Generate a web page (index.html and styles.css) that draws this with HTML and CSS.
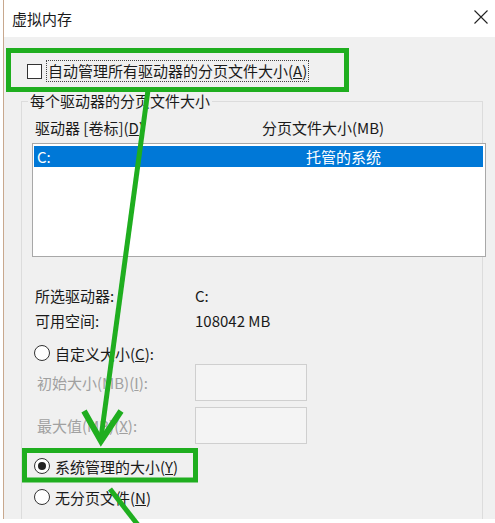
FILE: index.html
```html
<!DOCTYPE html>
<html lang="zh-CN">
<head>
<meta charset="utf-8">
<title>虚拟内存</title>
<link rel="stylesheet" href="styles.css">
</head>
<body>
<div class="page">
  <div class="window">
    <div class="titlebar">
      <span class="title">虚拟内存</span>
      <svg class="close" width="14" height="14" viewBox="0 0 14 14"><path d="M0.5 0.5 L13.5 13.5 M13.5 0.5 L0.5 13.5" stroke="#222" stroke-width="1.1" fill="none"/></svg>
    </div>
    <div class="content">
      <div class="auto-row">
        <span class="checkbox"></span>
        <span class="auto-label">自动管理所有驱动器的分页文件大小(<u>A</u>)</span>
      </div>
      <fieldset class="group">
        <legend>每个驱动器的分页文件大小</legend>
        <div class="list-header">
          <span class="col-drive">驱动器 [卷标](<u>D</u>)</span>
          <span class="col-size">分页文件大小(MB)</span>
        </div>
        <div class="list">
          <div class="list-row selected">
            <span class="cell-drive">C:</span>
            <span class="cell-size">托管的系统</span>
          </div>
        </div>
        <div class="info">
          <div class="info-row"><span class="info-label">所选驱动器:</span><span>C:</span></div>
          <div class="info-row"><span class="info-label">可用空间:</span><span>108042 MB</span></div>
        </div>
        <div class="radio-row r-custom"><span class="radio"></span><span>自定义大小(<u>C</u>):</span></div>
        <div class="field-row"><span class="field-label">初始大小(MB)(<u>I</u>):</span><span class="input"></span></div>
        <div class="field-row r-max"><span class="field-label">最大值(MB)(<u>X</u>):</span><span class="input"></span></div>
        <div class="radio-row r-system"><span class="radio checked"></span><span>系统管理的大小(<u>Y</u>)</span></div>
        <div class="radio-row r-none"><span class="radio"></span><span>无分页文件(<u>N</u>)</span></div>
      </fieldset>
    </div>
  </div>
  <svg class="annot" width="495" height="523" viewBox="0 0 495 523">
    <g fill="none" stroke="#1fae1f" stroke-width="5">
      <rect x="8.5" y="50.5" width="338" height="39"/>
      <rect x="24.5" y="450.5" width="171" height="29.5"/>
      <line x1="148" y1="90" x2="101" y2="438"/>
      <polyline points="84,411 101,441 121,411" stroke-width="6" stroke-linejoin="miter"/>
      <line x1="110" y1="489" x2="138" y2="525"/>
    </g>
  </svg>
</div>
</body>
</html>
```

FILE: styles.css
```css
html, body {
  margin: 0;
  padding: 0;
}

body {
  background: #fff;
  font-family: "Noto Sans CJK SC", "Noto Sans", sans-serif;
  font-size: 15px;
  color: #1a1a1a;
}

.page {
  position: relative;
  width: 495px;
  height: 523px;
  overflow: hidden;
}

.window {
  margin-left: 3px;
  border-left: 1px solid #c8a88e;
  height: 519px;
  display: flex;
  flex-direction: column;
}

.titlebar {
  height: 37px;
  flex: none;
  background: #fff;
  display: flex;
  align-items: center;
  justify-content: space-between;
  padding: 0 7px 0 8px;
}

.title {
  line-height: 20px;
}

.close {
  margin-bottom: 3px;
}

.content {
  flex: 1;
  background: #f0f0f0;
  padding: 23px 0 0 17px;
  overflow: hidden;
}

.auto-row {
  display: flex;
  align-items: center;
  height: 22px;
  padding-left: 6px;
}

.checkbox {
  width: 15px;
  height: 15px;
  box-sizing: border-box;
  border: 1px solid #333;
  background: #fff;
}

.auto-label {
  margin-left: 4px;
  line-height: 20px;
  border: 1px dotted #444;
  padding: 0 1px;
}

.group {
  margin: 9px 0 0 0;
  width: 462px;
  min-width: 0;
  box-sizing: border-box;
  border: 1px solid #dcdcdc;
  padding: 0 0 30px 10px;
}

.group legend {
  margin-left: -4px;
  padding: 0 2px;
  line-height: 20px;
}

.list-header {
  display: flex;
  margin-top: 7px;
  height: 20px;
  line-height: 20px;
  padding-left: 3px;
}

.col-drive {
  width: 227px;
}

.list {
  margin-top: 5px;
  width: 454px;
  height: 114px;
  box-sizing: border-box;
  border: 1px solid #a8a8a8;
  background: #fff;
  padding: 2px 2px 0 1px;
}

.list-row {
  display: flex;
  align-items: center;
  height: 21px;
  padding-left: 3px;
  line-height: 20px;
}

.list-row.selected {
  background: #0078d7;
  color: #fff;
}

.cell-drive {
  width: 269px;
}

.info {
  margin-top: 26px;
  padding-left: 3px;
}

.info-row {
  display: flex;
  align-items: center;
  height: 25px;
}

.info-label {
  width: 160px;
}

.radio-row {
  display: flex;
  align-items: center;
  height: 22px;
  padding-left: 2px;
}

.radio {
  width: 16px;
  height: 16px;
  box-sizing: border-box;
  border: 1px solid #333;
  border-radius: 50%;
  background: #fff;
  margin-right: 5px;
  display: flex;
  align-items: center;
  justify-content: center;
}

.radio.checked::after {
  content: "";
  width: 8px;
  height: 8px;
  border-radius: 50%;
  background: #222;
}

.r-custom {
  margin-top: 9px;
}

.field-row {
  display: flex;
  align-items: center;
  height: 37px;
  padding-left: 5px;
  color: #a0a0a0;
}

.field-label {
  width: 158px;
}

.input {
  width: 112px;
  height: 37px;
  box-sizing: border-box;
  border: 1px solid #cfcfcf;
  background: #f4f4f4;
}

.r-max {
  margin-top: 6px;
}

.r-system {
  margin-top: 11px;
}

.r-none {
  margin-top: 9px;
}

.annot {
  position: absolute;
  top: 0;
  left: 0;
  pointer-events: none;
}
```
